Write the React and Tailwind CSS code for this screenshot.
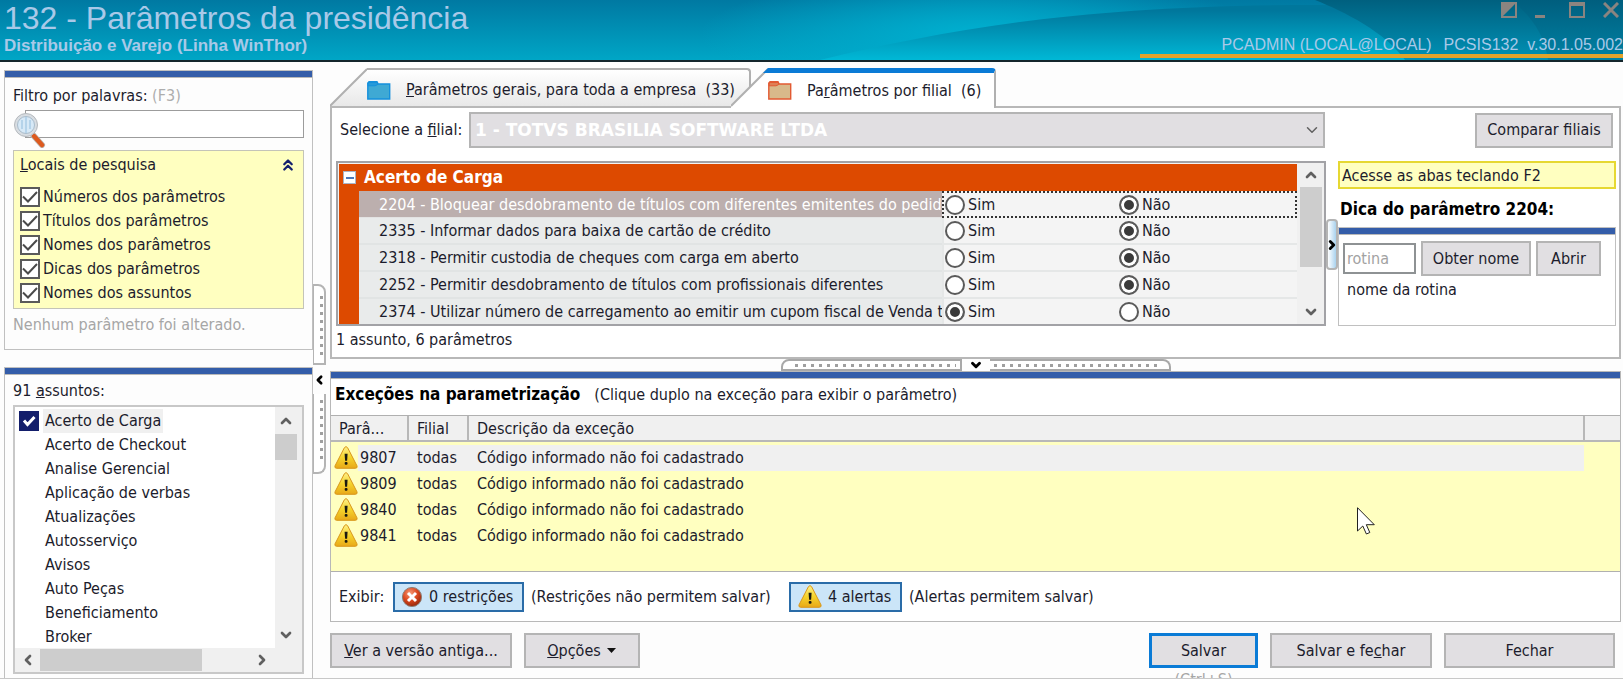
import React, { useState } from 'react';
import { ChevronDown, ChevronUp, ChevronLeft, ChevronRight, ChevronsUp } from 'lucide-react';

const searchPlaces = [
  'Números dos parâmetros',
  'Títulos dos parâmetros',
  'Nomes dos parâmetros',
  'Dicas dos parâmetros',
  'Nomes dos assuntos',
];

const subjects = [
  'Acerto de Carga',
  'Acerto de Checkout',
  'Analise Gerencial',
  'Aplicação de verbas',
  'Atualizações',
  'Autosserviço',
  'Avisos',
  'Auto Peças',
  'Beneficiamento',
  'Broker',
];

const initialParams = [
  { id: 2204, title: 'Bloquear desdobramento de títulos com diferentes emitentes do pedid', value: 'Não' },
  { id: 2335, title: 'Informar dados para baixa de cartão de crédito', value: 'Não' },
  { id: 2318, title: 'Permitir custodia de cheques com carga em aberto', value: 'Não' },
  { id: 2252, title: 'Permitir desdobramento de títulos com profissionais diferentes', value: 'Não' },
  { id: 2374, title: 'Utilizar número de carregamento ao emitir um cupom fiscal de Venda t', value: 'Sim' },
];

const exceptions = [9807, 9809, 9840, 9841];

function WarningIcon() {
  return (
    <svg className="h-6 w-6 shrink-0" viewBox="0 0 24 24" aria-hidden="true">
      <defs>
        <linearGradient id="warn" x1="0" y1="0" x2="0" y2="1">
          <stop offset="0" stopColor="#fdf08a" />
          <stop offset="0.5" stopColor="#f5d42c" />
          <stop offset="1" stopColor="#e8a818" />
        </linearGradient>
      </defs>
      <path d="M10.4 1.7Q12 -.5 13.6 1.7L23 19.9Q23.7 22.2 21.4 22.3H2.6Q.3 22.2 1 19.9Z" fill="url(#warn)" stroke="#d9961a" />
      <path d="M10.6 7.7h3l-.5 7h-2z" fill="#1a1a10" />
      <rect x="10.7" y="16.1" width="2.8" height="2.6" rx="1" fill="#1a1a10" />
    </svg>
  );
}

function ErrorIcon() {
  return (
    <svg className="h-[22px] w-[22px] shrink-0" viewBox="0 0 22 22" aria-hidden="true">
      <defs>
        <radialGradient id="err" cx="0.4" cy="0.3" r="0.75">
          <stop offset="0" stopColor="#f59a78" />
          <stop offset="0.5" stopColor="#dd4a20" />
          <stop offset="1" stopColor="#8f2408" />
        </radialGradient>
      </defs>
      <circle cx="11" cy="11" r="9.6" fill="url(#err)" stroke="#8d8078" strokeWidth="1" />
      <path d="M7 7l8 8M15 7l-8 8" stroke="#fff" strokeWidth="3" />
    </svg>
  );
}

function FolderIcon({ fill, stroke }) {
  return (
    <svg className="h-[19px] w-6 shrink-0" viewBox="0 0 24 19" aria-hidden="true">
      <path d="M.8 18V2.2L2 .8h8l1.2 2.2h11.5v15z" fill={fill} stroke={stroke} strokeWidth="1.4" />
      <path d="M1 1.5h9.5v2.2L8 4.8H1z" fill={stroke} fillOpacity="0.6" stroke={stroke} />
    </svg>
  );
}

function SearchIcon() {
  return (
    <svg className="h-[38px] w-[34px]" viewBox="0 0 34 38" aria-hidden="true">
      <path d="M20 25l9 10" stroke="#b9b3ae" strokeWidth="6" strokeLinecap="round" />
      <path d="M21 26l8 9" stroke="#dd5a1e" strokeWidth="4.4" strokeLinecap="round" />
      <circle cx="13" cy="15" r="11.5" fill="#d8dde2" stroke="#b5b9bd" />
      <circle cx="13" cy="15" r="8.5" fill="#d7e9f7" stroke="#a9bccb" />
      <path d="M13 7v16M9 10v9M17 10v9" stroke="#b5d3ea" strokeWidth="2" />
    </svg>
  );
}

function HeaderArt() {
  return (
    <svg className="absolute inset-0 h-full w-full" viewBox="0 0 1623 60" preserveAspectRatio="none" aria-hidden="true">
      <defs>
        <linearGradient id="hdBase" x1="0" y1="0" x2="0" y2="1">
          <stop offset="0" stopColor="#0079a2" />
          <stop offset="1" stopColor="#00a6c6" />
        </linearGradient>
        <radialGradient id="hdGlow" cx="0.5" cy="0.5" r="0.5">
          <stop offset="0" stopColor="#00b0d0" />
          <stop offset="1" stopColor="#00b0d0" stopOpacity="0" />
        </radialGradient>
        <linearGradient id="hdWave" x1="0" y1="0" x2="0" y2="1">
          <stop offset="0.1" stopColor="#00779c" />
          <stop offset="1" stopColor="#00b8d6" />
        </linearGradient>
        <linearGradient id="hdDark" x1="0" y1="0" x2="0" y2="1">
          <stop offset="0" stopColor="#00607f" />
          <stop offset="1" stopColor="#0092b6" />
        </linearGradient>
        <linearGradient id="hdEnd" x1="0" y1="0" x2="0" y2="1">
          <stop offset="0" stopColor="#005e7e" />
          <stop offset="1" stopColor="#0082a4" />
        </linearGradient>
      </defs>
      <rect width="1623" height="60" fill="url(#hdBase)" />
      <ellipse cx="980" cy="34" rx="280" ry="60" fill="url(#hdGlow)" />
      <path d="M820 60C960 26 1100 4 1330 5H1623V60Z" fill="url(#hdWave)" />
      <path d="M1315 0C1345 12 1385 32 1405 60H1623V0Z" fill="url(#hdDark)" />
      <path d="M1512 0C1530 16 1544 32 1548 60H1623V0Z" fill="url(#hdEnd)" />
    </svg>
  );
}

function Header() {
  return (
    <header className="relative flex h-[62px] shrink-0 justify-between overflow-hidden border-b-2 border-[#14262c] font-['Liberation_Sans',sans-serif] text-[#a9c9e8]">
      <HeaderArt />
      <div className="relative pl-1">
        <h1 className="text-[32px] leading-9">132 - Parâmetros da presidência</h1>
        <p className="text-[17px] leading-5 font-bold">Distribuição e Varejo (Linha WinThor)</p>
      </div>
      <div className="relative mb-0.5 flex w-[483px] flex-col justify-between border-b-4 border-[#e3a32c]">
        <div className="flex justify-end gap-[18px] pt-0.5 pr-1 text-[#8a8480]">
          <button type="button" aria-label="Tema">
            <svg className="h-4 w-4" viewBox="0 0 16 16"><path d="M1 1h14v14H1z" fill="none" stroke="currentColor" strokeWidth="2" /><path d="M0 0h16L0 16z" fill="currentColor" /></svg>
          </button>
          <button type="button" aria-label="Minimizar">
            <svg className="h-4 w-4" viewBox="0 0 16 16"><path d="M0 13h10v3H0z" fill="currentColor" /></svg>
          </button>
          <button type="button" aria-label="Maximizar">
            <svg className="h-4 w-4" viewBox="0 0 16 16"><path d="M1 1h14v14H1z" fill="none" stroke="currentColor" strokeWidth="2" /><path d="M0 0h16v4H0z" fill="currentColor" /></svg>
          </button>
          <button type="button" aria-label="Fechar janela">
            <svg className="h-4 w-4" viewBox="0 0 16 16"><path d="M1 1l14 14M15 1L1 15" stroke="currentColor" strokeWidth="3" /></svg>
          </button>
        </div>
        <div className="flex justify-end gap-3 text-base leading-[18px] whitespace-nowrap">
          <span>PCADMIN (LOCAL@LOCAL)</span>
          <span>PCSIS132&nbsp; v.30.1.05.002</span>
        </div>
      </div>
    </header>
  );
}

function BlueBar() {
  return <div className="h-[7px] shrink-0 border-b border-[#b8b8b8] bg-[#345da9]" />;
}

function FlatButton({ children, className = '' }) {
  return (
    <button type="button" className={`flex h-[35px] items-center justify-center border-2 border-[#b4b4b4] bg-[#e1dfe2] whitespace-nowrap ${className}`}>
      {children}
    </button>
  );
}

function FilterPanel() {
  return (
    <section className="flex h-[280px] shrink-0 flex-col border border-[#c0c0c0]">
      <BlueBar />
      <div className="px-2 pt-1.5">
        <label htmlFor="filter" className="block leading-6">
          Filtro por palavras: <span className="text-[#adadad]">(F3)</span>
        </label>
        <div className="relative pt-0.5 pl-3">
          <input id="filter" type="text" className="block h-7 w-full border border-[#9c9c9c] bg-white pr-2 pl-5 outline-none" />
          <div className="pointer-events-none absolute top-0.5 left-0">
            <SearchIcon />
          </div>
        </div>
        <fieldset className="mt-3 border border-[#c4c4b8] bg-[#ffffc0] px-1.5 pb-[3px]">
          <div className="flex h-7 items-center justify-between">
            <span><u>L</u>ocais de pesquisa</span>
            <button type="button" aria-label="Recolher" className="text-[#14206e]">
              <ChevronsUp size={18} strokeWidth={3} />
            </button>
          </div>
          <div className="pt-1.5">
            {searchPlaces.map((place) => (
              <label key={place} className="flex h-6 items-center gap-[3px]">
                <span className="grid">
                  <input type="checkbox" defaultChecked className="peer col-start-1 row-start-1 h-5 w-5 appearance-none border-2 border-[#5a5a5a] bg-white" />
                  <svg className="pointer-events-none invisible col-start-1 row-start-1 h-5 w-5 peer-checked:visible" viewBox="0 0 20 20">
                    <path d="M3 9.5l5 5L17 5" fill="none" stroke="#4a4a4a" strokeWidth="2" />
                  </svg>
                </span>
                {place}
              </label>
            ))}
          </div>
        </fieldset>
      </div>
      <p className="px-2 pt-1 text-[#a6a6a6]">Nenhum parâmetro foi alterado.</p>
    </section>
  );
}

function SubjectsPanel() {
  const [selected, setSelected] = useState(['Acerto de Carga']);

  const toggle = (name) => {
    setSelected(selected.includes(name) ? selected.filter((s) => s !== name) : [...selected, name]);
  };

  return (
    <section className="flex min-h-0 flex-1 flex-col border border-b-0 border-[#c0c0c0]">
      <BlueBar />
      <p className="px-2 pt-1 leading-6">91 <u>a</u>ssuntos:</p>
      <div className="mx-2 mt-0.5 mb-1 flex min-h-0 flex-1 flex-col border-2 border-[#c8c8c8] bg-white">
        <div className="flex min-h-0 flex-1">
          <ul className="min-w-0 flex-1 overflow-hidden pt-0.5">
            {subjects.map((name, i) => (
              <li key={name}>
                <label className="flex h-6 items-center gap-1">
                  <span className="ml-1 grid">
                    <input
                      type="checkbox"
                      checked={selected.includes(name)}
                      onChange={() => toggle(name)}
                      className="peer col-start-1 row-start-1 h-5 w-5 appearance-none checked:bg-[#131e6b]"
                    />
                    <svg className="pointer-events-none invisible col-start-1 row-start-1 h-5 w-5 peer-checked:visible" viewBox="0 0 20 20">
                      <path d="M5 9.5l3.500 4L15.500 6" fill="none" stroke="#fff" strokeWidth="3" />
                    </svg>
                  </span>
                  <span className={i === 0 ? 'bg-[#f0f0f0] px-0.5 leading-6' : 'px-0.5 leading-6'}>{name}</span>
                </label>
              </li>
            ))}
          </ul>
          <div className="flex w-[27px] flex-col items-start bg-[#f0f0f0] text-[#606060]">
            <button type="button" aria-label="Rolar para cima" className="flex h-[27px] w-[22px] shrink-0 items-center justify-center"><ChevronUp size={16} strokeWidth={4} /></button>
            <div className="h-[26px] w-[22px] shrink-0 bg-[#cdcdcd]" />
            <button type="button" aria-label="Rolar para baixo" className="mt-auto flex h-[27px] w-[22px] shrink-0 items-center justify-center"><ChevronDown size={16} strokeWidth={4} /></button>
          </div>
        </div>
        <div className="flex h-6 shrink-0 items-center bg-[#f0f0f0] text-[#606060]">
          <button type="button" aria-label="Rolar para a esquerda" className="flex w-[25px] justify-center"><ChevronLeft size={16} strokeWidth={4} /></button>
          <div className="h-[22px] w-[162px] bg-[#cdcdcd]" />
          <button type="button" aria-label="Rolar para a direita" className="mr-7 ml-auto flex w-[25px] justify-center"><ChevronRight size={16} strokeWidth={4} /></button>
        </div>
      </div>
    </section>
  );
}

// grip dots of the splitter handles
function Dots({ vertical }) {
  return vertical
    ? <div className="w-[3px] bg-[repeating-linear-gradient(to_bottom,#9f9f9f_0_3px,transparent_3px_8px)]" />
    : <div className="h-[3px] flex-1 bg-[repeating-linear-gradient(to_right,#9f9f9f_0_3px,transparent_3px_8px)]" />;
}

function VerticalSplitter() {
  return (
    <div className="flex w-[13px] shrink-0 flex-col pt-[222px]">
      <div className="flex h-[81px] justify-center rounded-tr-lg border-2 border-l border-[#b4b4b4] bg-white pt-2.5 pb-1 pl-1">
        <Dots vertical />
      </div>
      <button type="button" aria-label="Recolher painel" className="flex h-[29px] items-center justify-center text-black">
        <ChevronLeft size={14} strokeWidth={5} />
      </button>
      <div className="flex h-20 justify-center rounded-br-lg border-2 border-t-0 border-l border-[#b4b4b4] bg-white pt-1.5 pb-2 pl-1">
        <Dots vertical />
      </div>
    </div>
  );
}

function HorizontalSplitter() {
  return (
    <div className="flex h-3 shrink-0 justify-center">
      <div className="flex w-[181px] items-center rounded-tl-lg border-2 border-[#a8a8a8] bg-white pr-1 pl-3">
        <Dots />
      </div>
      <button type="button" aria-label="Recolher exceções" className="flex w-7 items-center justify-center text-black">
        <ChevronDown size={14} strokeWidth={5} />
      </button>
      <div className="flex w-[181px] items-center rounded-tr-lg border-2 border-l-0 border-[#a8a8a8] bg-white pr-3 pl-1">
        <Dots />
      </div>
    </div>
  );
}

function Tabs() {
  return (
    <div role="tablist" className="flex h-[38px] shrink-0">
      <button type="button" role="tab" aria-selected="false" className="flex">
        <svg className="h-[38px] w-[37px]" viewBox="0 0 37 38" aria-hidden="true">
          <defs>
            <linearGradient id="tabBg" x1="0" y1="0" x2="0" y2="1">
              <stop offset="0" stopColor="#ffffff" />
              <stop offset="1" stopColor="#e8e8e8" />
            </linearGradient>
          </defs>
          <path d="M0 38L37 1V38Z" fill="url(#tabBg)" />
          <path d="M0 38L37 1" stroke="#b0b0b0" strokeWidth="2" />
        </svg>
        <span className="flex h-full w-[384px] items-center rounded-tr border-2 border-b-0 border-l-0 border-[#b0b0b0] bg-linear-to-b from-white to-[#e8e8e8] pt-1 whitespace-nowrap">
          <FolderIcon fill="#3fa9d4" stroke="#1590dc" />
          <span className="pl-[15px]"><u>P</u>arâmetros gerais, para toda a empresa&nbsp; (33)</span>
        </span>
      </button>
      <button type="button" role="tab" aria-selected="true" className="z-10 -ml-5 flex h-[40px]">
        <svg className="h-[40px] w-[37px]" viewBox="0 0 37 40" aria-hidden="true">
          <path d="M0 40V38L37 1V40Z" fill="#fff" />
          <path d="M0 38L37 1" stroke="#b0b0b0" strokeWidth="2" />
          <path d="M37 0V5H32Z" fill="#0a7bd6" />
        </svg>
        <span className="flex h-full w-[228px] items-center rounded-tr border-t-5 border-r-2 border-t-[#0a7bd6] border-r-[#b0b0b0] bg-white whitespace-nowrap">
          <FolderIcon fill="#d8b98a" stroke="#e25a32" />
          <span className="pl-[15px]">Pa<u>r</u>âmetros por filial&nbsp; (6)</span>
        </span>
      </button>
    </div>
  );
}

function ParamGrid() {
  const [params, setParams] = useState(initialParams);
  const [active, setActive] = useState(2204);

  const setValue = (id, value) => {
    setActive(id);
    setParams(params.map((p) => (p.id === id ? { ...p, value } : p)));
  };

  return (
    <div className="flex h-[165px] min-w-0 flex-1 border-2 border-[#a2a2a6] bg-[#f4f4f4]">
      <div className="min-w-0 flex-1 overflow-hidden pt-px pl-px">
        <table className="w-full table-fixed border-separate border-spacing-0">
          <colgroup>
            <col className="w-5" />
            <col className="w-[583px]" />
            <col />
          </colgroup>
          <thead>
            <tr className="bg-[#dd4a00] text-left text-white">
              <th colSpan={3} className="p-0">
                <div className="flex h-[27px] items-center gap-2 pl-1 text-[17px] leading-[27px]">
                  <button type="button" aria-label="Recolher assunto" className="flex h-[13px] w-[13px] items-center justify-center border border-[#a8b4c8] bg-white">
                    <span className="h-0.5 w-2 bg-[#4a78b8]" />
                  </button>
                  Acerto de Carga
                </div>
              </th>
            </tr>
          </thead>
          <tbody>
            {params.map((p) => (
              <tr key={p.id}>
                <td className="bg-[#dd4a00] p-0" />
                <td className={p.id === active
                  ? 'h-[27px] border-b border-[#e3e3e3] bg-[#bcafae] p-0 pl-5 text-white'
                  : 'h-[27px] border-b-2 border-[#e1e4e4] bg-[#e9ebeb] p-0 pl-5'}
                >
                  <div className="overflow-hidden leading-[25px] whitespace-nowrap">{p.id} - {p.title}</div>
                </td>
                <td className={p.id === active
                  ? 'h-[27px] border-2 border-dotted border-[#333] bg-[#f4f4f4] p-0'
                  : 'h-[27px] border-b-2 border-l-2 border-[#e5e7e7] bg-[#f4f4f4] p-0'}
                >
                  <div className="flex leading-[23px]">
                    {['Sim', 'Não'].map((option) => (
                      <label key={option} className="flex w-[174px] shrink-0 items-center gap-[3px] pl-px">
                        <input
                          type="radio"
                          name={`param-${p.id}`}
                          checked={p.value === option}
                          onChange={() => setValue(p.id, option)}
                          className="h-5 w-5 appearance-none rounded-full border-2 border-[#5a5a5a] bg-white checked:bg-[#3a3a3a] checked:shadow-[inset_0_0_0_3px_white]"
                        />
                        {option}
                      </label>
                    ))}
                  </div>
                </td>
              </tr>
            ))}
          </tbody>
        </table>
      </div>
      <div className="flex w-[27px] shrink-0 flex-col items-center bg-[#f0f0f0] text-[#606060]">
        <button type="button" aria-label="Rolar para cima" className="flex h-6 w-full items-center justify-center"><ChevronUp size={16} strokeWidth={4} /></button>
        <div className="h-20 w-[22px] bg-[#cdcdcd]" />
        <button type="button" aria-label="Rolar para baixo" className="mt-auto flex h-6 w-full items-center justify-center"><ChevronDown size={16} strokeWidth={4} /></button>
      </div>
    </div>
  );
}

function TipPanel() {
  return (
    <aside className="flex h-[165px] w-[278px] shrink-0 flex-col">
      <p className="h-7 shrink-0 border-2 border-[#e6d832] bg-[#ffffc0] pl-0.5 leading-[25px]">Acesse as abas teclando F2</p>
      <h2 className="pt-1 pb-0.5 pl-0.5 text-[17px] leading-8 font-bold text-black">Dica do parâmetro 2204:</h2>
      <div className="min-h-0 flex-1 border border-[#c0c0c0]">
        <BlueBar />
        <div className="flex items-center gap-[5px] px-1 pt-1.5">
          <input type="text" aria-label="Rotina" placeholder="rotina" className="h-[31px] w-[73px] border-2 border-[#8e9294] bg-white px-0.5 outline-none placeholder:text-[#a2a2a2]" />
          <FlatButton className="w-[110px]">Obter nome</FlatButton>
          <FlatButton className="w-[65px]">Abrir</FlatButton>
        </div>
        <p className="pt-0.5 pl-2">nome da rotina</p>
      </div>
    </aside>
  );
}

function BranchPanel() {
  return (
    <section className="flex h-[253px] shrink-0 flex-col border-2 border-[#b8b8b8] bg-white pt-1 pr-[3px] pl-1">
      <div className="flex items-center justify-between pr-[3px]">
        <div className="mr-[150px] flex min-w-0 flex-1 items-center pl-1">
          <label htmlFor="branch" className="w-[129px] shrink-0">Selecione a <u>f</u>ilial:</label>
          <div className="relative min-w-0 flex-1">
            <select id="branch" disabled className="block h-9 w-full appearance-none border-2 border-[#b4b4b4] bg-[#e1dfe2] px-1 pt-0.5 font-['DejaVu_Sans',sans-serif] text-[17px] font-bold text-white opacity-100">
              <option>1 - TOTVS BRASILIA SOFTWARE LTDA</option>
            </select>
            <ChevronDown size={18} strokeWidth={2} className="pointer-events-none absolute top-[9px] right-1 text-[#606060]" />
          </div>
        </div>
        <FlatButton className="w-[138px]">Comparar filiais</FlatButton>
      </div>
      <div className="flex pt-[13px]">
        <ParamGrid />
        <button type="button" aria-label="Recolher dica" className="mt-[58px] flex h-[51px] w-3 shrink-0 items-center justify-center rounded border-2 border-[#b4b4b4] bg-linear-to-r from-white to-[#a9d2ee] text-black">
          <ChevronRight size={14} strokeWidth={5} className="shrink-0" />
        </button>
        <TipPanel />
      </div>
      <p className="pt-0.5 leading-6">1 assunto, 6 parâmetros</p>
    </section>
  );
}

function ExceptionsPanel() {
  return (
    <section className="relative flex min-h-0 flex-1 flex-col border border-[#b8b8b8] bg-white">
      <BlueBar />
      <div className="flex h-9 shrink-0 items-center gap-[14px] pb-1 pl-1">
        <h2 className="text-[17px] font-bold text-black">Exceções na parametrização</h2>
        <span>(Clique duplo na exceção para exibir o parâmetro)</span>
      </div>
      <div className="min-h-0 flex-1 border-y border-[#b0b0b0] bg-[#ffffc0]">
        <table className="w-full table-fixed border-collapse">
          <colgroup>
            <col className="w-[77px]" />
            <col className="w-[60px]" />
            <col />
            <col className="w-[36px]" />
          </colgroup>
          <thead>
            <tr className="h-[25px] border-b-2 border-[#b8b8b8] bg-[#f0f0f0] text-left">
              <th className="border-r-2 border-[#b8b8b8] p-0 pl-2 leading-[23px] font-normal">Parâ...</th>
              <th className="border-r-2 border-[#b8b8b8] p-0 pl-2 leading-[23px] font-normal">Filial</th>
              <th className="border-r-2 border-[#b8b8b8] p-0 pl-2 leading-[23px] font-normal">Descrição da exceção</th>
              <th aria-label="Vazio" />
            </tr>
          </thead>
          <tbody>
            <tr className="h-1"><td colSpan={4} className="p-0" /></tr>
            {exceptions.map((code, i) => (
              <tr key={code} className={i === 0 ? 'bg-linear-to-r from-[#ffffc0] from-[27px] to-[#f0f0f0] to-[27px]' : ''}>
                <td className="p-0 pl-[3px]">
                  <div className="flex h-[26px] items-center gap-0.5">
                    <WarningIcon />
                    {code}
                  </div>
                </td>
                <td className="p-0 pl-[9px]">todas</td>
                <td className="p-0 pl-[9px]">Código informado não foi cadastrado</td>
                <td className="bg-[#ffffc0] p-0" />
              </tr>
            ))}
          </tbody>
        </table>
      </div>
      <div className="flex h-[49px] shrink-0 items-center pl-2 whitespace-nowrap">
        <span className="w-[54px]">Exibir:</span>
        <button type="button" className="flex h-[30px] w-[131px] items-center gap-1.5 border-2 border-[#2a6ca8] bg-[#cbe5f8] pl-1.5">
          <ErrorIcon />
          0 restrições
        </button>
        <span className="w-[265px] pl-[7px]">(Restrições não permitem salvar)</span>
        <button type="button" className="flex h-[30px] w-[113px] items-center gap-1.5 border-2 border-[#2a6ca8] bg-[#cbe5f8] pl-[7px]">
          <WarningIcon />
          4 alertas
        </button>
        <span className="pl-[7px]">(Alertas permitem salvar)</span>
      </div>
      <svg className="pointer-events-none absolute top-[135px] right-[244px] h-7 w-[19px]" viewBox="0 0 19 28" aria-hidden="true">
        <path d="M.5.7V24l5.300-5 3.600 8 3.400-1.500-3.500-7.800h8Z" fill="#fff" stroke="#222" />
      </svg>
    </section>
  );
}

function ActionBar() {
  return (
    <footer className="flex h-[56px] shrink-0 pt-[11px] pr-1.5">
      <FlatButton className="w-[182px]"><span><u>V</u>er a versão antiga...</span></FlatButton>
      <FlatButton className="ml-3 w-[116px] gap-1.5">
        <span><u>O</u>pções</span>
        <svg className="h-1.5 w-2.5" viewBox="0 0 10 6" aria-hidden="true"><path d="M0 0h9L4.5 5Z" fill="#111" /></svg>
      </FlatButton>
      <div className="ml-auto flex gap-3">
        <div className="flex w-[109px] flex-col items-center">
          <button type="button" className="h-[35px] w-full shrink-0 border-3 border-[#0a7bd6] bg-[#e1dfe2]">Salvar</button>
          <span className="leading-6 text-[#a6a6a6]">(Ctrl+S)</span>
        </div>
        <FlatButton className="w-[162px]"><span>Salvar e fe<u>c</u>har</span></FlatButton>
        <FlatButton className="w-[171px]">Fechar</FlatButton>
      </div>
    </footer>
  );
}

export default function App() {
  return (
    <div className="flex h-screen flex-col overflow-hidden border-b border-[#c8c8c8] bg-[#fdfdfd] font-['DejaVu_Sans_Condensed','DejaVu_Sans',sans-serif] text-base text-[#1c1c2c]">
      <Header />
      <main className="flex min-h-0 flex-1 pl-1">
        <div className="flex w-[309px] shrink-0 flex-col gap-[17px] pt-2">
          <FilterPanel />
          <SubjectsPanel />
        </div>
        <VerticalSplitter />
        <div className="flex min-w-0 flex-1 flex-col pt-[6px] pr-0.5 pl-1">
          <Tabs />
          <BranchPanel />
          <HorizontalSplitter />
          <ExceptionsPanel />
          <ActionBar />
        </div>
      </main>
    </div>
  );
}
